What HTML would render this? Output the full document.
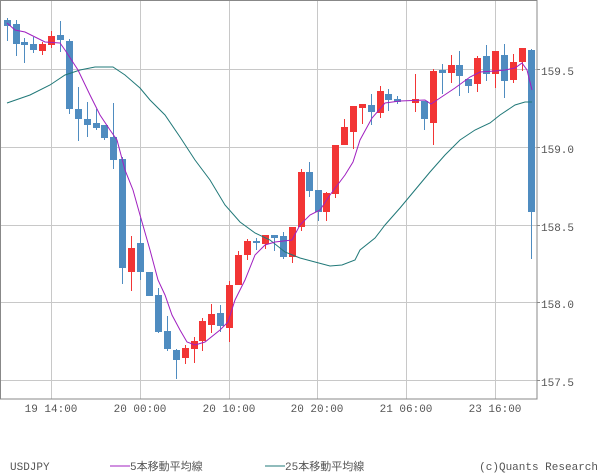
<!DOCTYPE html>
<html><head><meta charset="utf-8"><style>
html,body{margin:0;padding:0;background:#fff;width:600px;height:475px;overflow:hidden}
svg{display:block}
text{font-family:"Liberation Mono","Noto Sans CJK JP",monospace;font-size:11px;fill:#555}
</style></head><body>
<svg width="600" height="475" viewBox="0 0 600 475" xmlns="http://www.w3.org/2000/svg">
<g stroke="#c8c8c8" stroke-width="1" shape-rendering="crispEdges">
<line x1="51.5" y1="0" x2="51.5" y2="399"/><line x1="140.5" y1="0" x2="140.5" y2="399"/>
<line x1="229.5" y1="0" x2="229.5" y2="399"/><line x1="317.5" y1="0" x2="317.5" y2="399"/>
<line x1="406.5" y1="0" x2="406.5" y2="399"/><line x1="495.5" y1="0" x2="495.5" y2="399"/>
<line x1="0" y1="69.5" x2="537" y2="69.5"/><line x1="0" y1="147.5" x2="537" y2="147.5"/>
<line x1="0" y1="225.5" x2="537" y2="225.5"/><line x1="0" y1="302.5" x2="537" y2="302.5"/>
<line x1="0" y1="380.5" x2="537" y2="380.5"/>
</g>
<g stroke="#888" stroke-width="1" shape-rendering="crispEdges" fill="none">
<rect x="0.5" y="0.5" width="536.5" height="398.5"/>
<line x1="537" y1="69.5" x2="540" y2="69.5"/><line x1="537" y1="147.5" x2="540" y2="147.5"/>
<line x1="537" y1="225.5" x2="540" y2="225.5"/><line x1="537" y1="302.5" x2="540" y2="302.5"/>
<line x1="537" y1="380.5" x2="540" y2="380.5"/>
</g>
<g shape-rendering="crispEdges" fill="#4f8cc0">
<rect x="7" y="18" width="1" height="23"/><rect x="4" y="20" width="7" height="6"/>
<rect x="16" y="20" width="1" height="36"/><rect x="13" y="24" width="7" height="20"/>
<rect x="24" y="38" width="1" height="25"/><rect x="21" y="42" width="7" height="3"/>
<rect x="33" y="37" width="1" height="16"/><rect x="30" y="44" width="7" height="6"/>
<rect x="60" y="21" width="1" height="31"/><rect x="57" y="35" width="7" height="5"/>
<rect x="69" y="39" width="1" height="75"/><rect x="66" y="41" width="7" height="68"/>
<rect x="78" y="87" width="1" height="54"/><rect x="75" y="109" width="7" height="10"/>
<rect x="87" y="102" width="1" height="35"/><rect x="84" y="119" width="7" height="6"/>
<rect x="96" y="109" width="1" height="21"/><rect x="93" y="123" width="7" height="5"/>
<rect x="104" y="125" width="1" height="15"/><rect x="101" y="125" width="7" height="13"/>
<rect x="113" y="103" width="1" height="66"/><rect x="110" y="137" width="7" height="23"/>
<rect x="122" y="157" width="1" height="127"/><rect x="119" y="159" width="7" height="109"/>
<rect x="140" y="218" width="1" height="62"/><rect x="137" y="243" width="7" height="29"/>
<rect x="146" y="272" width="7" height="24"/>
<rect x="158" y="288" width="1" height="45"/><rect x="155" y="295" width="7" height="37"/>
<rect x="167" y="316" width="1" height="35"/><rect x="164" y="331" width="7" height="18"/>
<rect x="176" y="349" width="1" height="30"/><rect x="173" y="350" width="7" height="10"/>
<rect x="220" y="305" width="1" height="27"/><rect x="217" y="313" width="7" height="13"/>
<rect x="256" y="238" width="1" height="12"/><rect x="253" y="241" width="7" height="2"/>
<rect x="274" y="235" width="1" height="16"/><rect x="271" y="235" width="7" height="3"/>
<rect x="283" y="232" width="1" height="27"/><rect x="280" y="236" width="7" height="21"/>
<rect x="309" y="162" width="1" height="35"/><rect x="306" y="172" width="7" height="19"/>
<rect x="318" y="190" width="1" height="31"/><rect x="315" y="190" width="7" height="22"/>
<rect x="371" y="94" width="1" height="31"/><rect x="368" y="105" width="7" height="7"/>
<rect x="388" y="89" width="1" height="22"/><rect x="385" y="94" width="7" height="6"/>
<rect x="397" y="96" width="1" height="8"/><rect x="394" y="99" width="7" height="3"/>
<rect x="424" y="101" width="1" height="29"/><rect x="421" y="101" width="7" height="18"/>
<rect x="442" y="64" width="1" height="30"/><rect x="439" y="70" width="7" height="3"/>
<rect x="459" y="51" width="1" height="45"/><rect x="456" y="65" width="7" height="11"/>
<rect x="468" y="79" width="1" height="14"/><rect x="465" y="79" width="7" height="7"/>
<rect x="486" y="45" width="1" height="36"/><rect x="483" y="56" width="7" height="18"/>
<rect x="504" y="44" width="1" height="54"/><rect x="501" y="55" width="7" height="26"/>
<rect x="531" y="49" width="1" height="210"/><rect x="528" y="50" width="7" height="162"/>
</g>
<g shape-rendering="crispEdges" fill="#f23535">
<rect x="42" y="42" width="1" height="13"/><rect x="39" y="44" width="7" height="7"/>
<rect x="51" y="31" width="1" height="17"/><rect x="48" y="36" width="7" height="9"/>
<rect x="131" y="236" width="1" height="55"/><rect x="128" y="248" width="7" height="24"/>
<rect x="185" y="345" width="1" height="19"/><rect x="182" y="348" width="7" height="10"/>
<rect x="194" y="337" width="1" height="26"/><rect x="191" y="341" width="7" height="8"/>
<rect x="202" y="318" width="1" height="33"/><rect x="199" y="321" width="7" height="20"/>
<rect x="211" y="304" width="1" height="29"/><rect x="208" y="314" width="7" height="11"/>
<rect x="229" y="281" width="1" height="61"/><rect x="226" y="285" width="7" height="43"/>
<rect x="238" y="251" width="1" height="34"/><rect x="235" y="255" width="7" height="30"/>
<rect x="247" y="239" width="1" height="21"/><rect x="244" y="241" width="7" height="14"/>
<rect x="265" y="235" width="1" height="14"/><rect x="262" y="235" width="7" height="9"/>
<rect x="292" y="227" width="1" height="36"/><rect x="289" y="227" width="7" height="30"/>
<rect x="301" y="169" width="1" height="62"/><rect x="298" y="172" width="7" height="55"/>
<rect x="326" y="192" width="1" height="29"/><rect x="323" y="193" width="7" height="19"/>
<rect x="335" y="145" width="1" height="53"/><rect x="332" y="145" width="7" height="49"/>
<rect x="344" y="119" width="1" height="26"/><rect x="341" y="127" width="7" height="18"/>
<rect x="353" y="106" width="1" height="43"/><rect x="350" y="106" width="7" height="26"/>
<rect x="362" y="104" width="1" height="20"/><rect x="359" y="104" width="7" height="4"/>
<rect x="380" y="86" width="1" height="32"/><rect x="377" y="91" width="7" height="22"/>
<rect x="415" y="74" width="1" height="38"/><rect x="412" y="99" width="7" height="4"/>
<rect x="433" y="69" width="1" height="76"/><rect x="430" y="71" width="7" height="52"/>
<rect x="451" y="55" width="1" height="28"/><rect x="448" y="65" width="7" height="8"/>
<rect x="477" y="56" width="1" height="36"/><rect x="474" y="58" width="7" height="26"/>
<rect x="495" y="51" width="1" height="37"/><rect x="492" y="51" width="7" height="23"/>
<rect x="513" y="54" width="1" height="29"/><rect x="510" y="62" width="7" height="18"/>
<rect x="522" y="48" width="1" height="23"/><rect x="519" y="48" width="7" height="14"/>
</g>
<polyline fill="none" stroke="#207878" stroke-width="1" points="7,103 30,95 50,85 65,75 80,70 95,67 113,67 125,75 140,88 150,100 165,115 180,137 195,160 210,180 225,205 240,222 255,233 270,240 285,252 300,258 315,262 330,266 342,265 355,260 360,250 375,238 385,225 400,208 415,190 430,172 445,155 460,140 475,130 490,123 500,115 515,105 525,102 532,102"/>
<polyline fill="none" stroke="#a020c0" stroke-width="1" points="7,23 15,30 25,32 35,37 45,42 60,43 65,50 78,70 90,95 100,115 110,130 117,140 125,170 133,190 140,215 150,250 158,280 165,295 172,315 180,330 187,342 195,345 205,342 220,330 228,322 235,300 245,280 255,255 265,245 275,242 292,240 300,225 310,215 320,210 330,195 345,175 353,162 360,140 372,118 385,103 400,101 425,100 431,104 440,98 455,88 470,77 480,72 495,71 505,70 515,68 522,63 527,70 532,90"/>
<g>
<text x="541" y="75">159.5</text><text x="541" y="153">159.0</text><text x="541" y="231">158.5</text><text x="541" y="308">158.0</text><text x="541" y="386">157.5</text>
<text x="51" y="412" text-anchor="middle">19 14:00</text><text x="140" y="412" text-anchor="middle">20 00:00</text>
<text x="229" y="412" text-anchor="middle">20 10:00</text><text x="317" y="412" text-anchor="middle">20 20:00</text>
<text x="406" y="412" text-anchor="middle">21 06:00</text><text x="495" y="412" text-anchor="middle">23 16:00</text>
<text x="10" y="470">USDJPY</text>
<line x1="110" y1="466" x2="130" y2="466" stroke="#a020c0"/><text x="130" y="470">5本移動平均線</text>
<line x1="265" y1="466" x2="285" y2="466" stroke="#207878"/><text x="285" y="470">25本移動平均線</text>
<text x="598" y="470" text-anchor="end">(c)Quants Research</text>
</g>
</svg>
</body></html>
